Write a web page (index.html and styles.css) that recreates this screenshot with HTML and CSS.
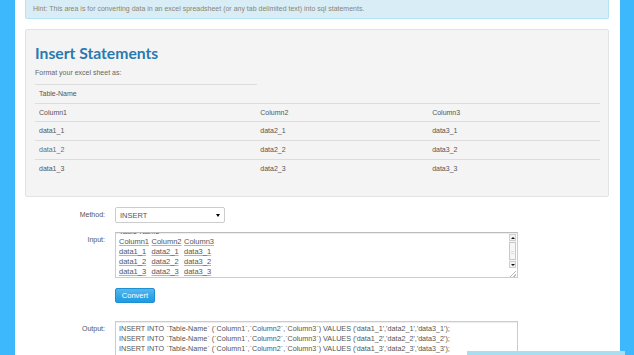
FILE: index.html
```html
<!DOCTYPE html>
<html>
<head>
    <meta name="viewport" content="width=device-width">
    <link rel="stylesheet" href="styles.css">
</head>
<body>
    <div class="page">
        <div class="hint">Hint: This area is for converting data in an excel spreadsheet (or any tab delimited text) into sql statements.</div>
        <div class="well">
            <h1>Insert Statements</h1>
            <p class="note">Format your excel sheet as:</p>
            <table class="sample name-table">
                <tr><td>Table-Name</td></tr>
            </table>
            <table class="sample data-table">
                <tr><td class="first">Column1</td><td>Column2</td><td>Column3</td></tr>
                <tr><td class="first">data1_1</td><td>data2_1</td><td>data3_1</td></tr>
                <tr><td class="first">data1_2</td><td>data2_2</td><td>data3_2</td></tr>
                <tr><td class="first">data1_3</td><td>data2_3</td><td>data3_3</td></tr>
            </table>
        </div>
        <form class="converter" onsubmit="return false">
            <label class="field-label" for="method">Method:</label>
            <div class="select-wrap">
                <select id="method">
                    <option>INSERT</option>
                    <option>UPDATE</option>
                </select>
            </div>
            <label class="field-label">Input:</label>
            <div class="input-box">
                <div class="input-text" id="input">
                    <div class="line">Table-Name</div>
                    <div class="line"><span class="cell">Column1</span><span class="cell">Column2</span><span class="cell">Column3</span></div>
                    <div class="line"><span class="cell">data1_1</span><span class="cell">data2_1</span><span class="cell">data3_1</span></div>
                    <div class="line"><span class="cell">data1_2</span><span class="cell">data2_2</span><span class="cell">data3_2</span></div>
                    <div class="line"><span class="cell">data1_3</span><span class="cell">data2_3</span><span class="cell">data3_3</span></div>
                </div>
                <div class="scrollbar">
                    <span class="sb-btn up"></span>
                    <span class="sb-track"><span class="sb-thumb"></span></span>
                    <span class="sb-btn down"></span>
                    <span class="sb-corner"></span>
                </div>
            </div>
            <span></span>
            <div class="actions"><button type="submit" class="btn">Convert</button></div>
            <label class="field-label" for="output">Output:</label>
            <textarea id="output" class="output-box" readonly>INSERT INTO `Table-Name` (`Column1`,`Column2`,`Column3`) VALUES ('data1_1','data2_1','data3_1');
INSERT INTO `Table-Name` (`Column1`,`Column2`,`Column3`) VALUES ('data1_2','data2_2','data3_2');
INSERT INTO `Table-Name` (`Column1`,`Column2`,`Column3`) VALUES ('data1_3','data2_3','data3_3');</textarea>
        </form>
    </div>
    <div class="toast-edge"></div>
    <script>
        document.getElementById("input").scrollTop = 9;
    </script>
</body>
</html>
```

FILE: styles.css
```css
html, body {height: 100%}
body {
    margin: 0;
    overflow: hidden;
    background: #3eb8fd;
    color: #555;
    font-family: "Liberation Sans", Arial, sans-serif;
    font-size: 7px;
}
.page {
    margin: 0 14px 0 15px;
    padding: 0 11px 0 10px;
    min-height: 100%;
    background: #fff;
}
.hint {
    height: 18px;
    line-height: 18px;
    padding: 0 7px;
    background: #d9edf7;
    border: 1px solid #b5e5f2;
    border-top: 0;
    border-radius: 0 0 2px 2px;
    color: #8a8672;
}
.well {
    margin-top: 10px;
    height: 166px;
    padding: 0 9px;
    background: #f4f4f4;
    border: 1px solid #e3e3e3;
    border-radius: 2px;
}
.well h1 {
    margin: 12px 0 0 0;
    font-family: Lato, sans-serif;
    font-weight: 700;
    font-size: 15.7px;
    line-height: 22px;
    color: #2a79b1;
}
.note {
    margin: 4px 0 0 0;
    line-height: 10px;
    color: #666;
}
.sample {
    border-collapse: collapse;
    color: #555;
}
.sample td {
    padding: 4px;
    line-height: 9.7px;
    text-align: left;
    border-top: 1px solid #ddd;
}
.name-table {width: 222px; margin-top: 6px}
.data-table {width: 565px}
.data-table td {width: 171px}
.data-table td.first {width: 223px}
.data-table tr:nth-child(3) td.first {color: #5d6e86}

.converter {
    display: grid;
    grid-template-columns: 80px 403px;
    column-gap: 10px;
    row-gap: 9px;
    margin-top: 10px;
}
.field-label {
    text-align: right;
    padding-top: 3px;
    line-height: 10px;
    color: #555;
}
.select-wrap {
    position: relative;
    width: 110px;
}
.select-wrap select {
    -webkit-appearance: none;
    appearance: none;
    width: 110px;
    height: 16px;
    padding: 0 4px;
    border: 1px solid #ccc;
    border-radius: 2px;
    background: #fff;
    color: #555;
    font-family: inherit;
    font-size: 7.5px;
}
.select-wrap::after {
    content: "";
    position: absolute;
    right: 5px;
    top: 7px;
    border-left: 2px solid transparent;
    border-right: 2px solid transparent;
    border-top: 3px solid #000;
    pointer-events: none;
}
.input-box {
    display: flex;
    height: 44px;
    border: 1px solid #ccc;
    border-top-color: #bbb;
    box-shadow: inset 0 1px 1px rgba(0,0,0,.075);
}
.input-text {
    flex: 1;
    overflow: hidden;
    padding: 3px;
    font-size: 7.5px;
    line-height: 10px;
    color: #555;
}
.line {white-space: nowrap}
.cell {
    display: inline-block;
    width: 32.5px;
}
.line .cell {
    text-decoration: underline #f29c9c 1px;
    text-underline-offset: 1px;
}
.scrollbar {
    display: flex;
    flex-direction: column;
    width: 7px;
    margin-right: 1px;
    padding-top: 1px;
}
.sb-btn {
    position: relative;
    height: 7px;
    background: #f2f2f2;
    border: 1px solid #cfcfcf;
    box-sizing: border-box;
}
.sb-btn::after {
    content: "";
    position: absolute;
    left: 1px;
    top: 2px;
    border-left: 2px solid transparent;
    border-right: 2px solid transparent;
}
.sb-btn.up::after {border-bottom: 2px solid #111}
.sb-btn.down::after {border-top: 2px solid #111}
.sb-track {
    flex: 1;
    display: flex;
    background: #f3f3f3;
    padding: 1px 0;
}
.sb-thumb {
    flex: 1;
    background: linear-gradient(#ddd, #ddd) center 8px / 3px 1px no-repeat,
                linear-gradient(#ddd, #ddd) center 10px / 3px 1px no-repeat,
                #f6f6f6;
    border: 1px solid #c8c8c8;
    box-sizing: border-box;
}
.sb-corner {
    height: 9px;
    background: linear-gradient(135deg, transparent 60%, #bbb 60%, #bbb 68%, transparent 68%, transparent 80%, #bbb 80%, #bbb 88%, transparent 88%);
}
.actions {padding-top: 1px; padding-bottom: 9px}
.btn {
    width: 40px;
    height: 15px;
    padding: 0;
    border: 1px solid #1d8fd3;
    border-radius: 2px;
    background: linear-gradient(#58b7ec, #2fa4e7 60%, #1f9be3);
    color: #fff;
    font-family: inherit;
    font-size: 7.5px;
}
.output-box {
    display: block;
    width: 403px;
    height: 60px;
    box-sizing: border-box;
    margin: 0;
    padding: 2px 3px;
    resize: none;
    border: 1px solid #ccc;
    box-shadow: inset 0 1px 1px rgba(0,0,0,.075);
    font-family: inherit;
    font-size: 7.2px;
    line-height: 10px;
    color: #555;
    white-space: pre;
    overflow: hidden;
}
.toast-edge {
    position: fixed;
    left: 467px;
    bottom: 0;
    width: 158px;
    height: 4px;
    background: #a8deef;
}
```
